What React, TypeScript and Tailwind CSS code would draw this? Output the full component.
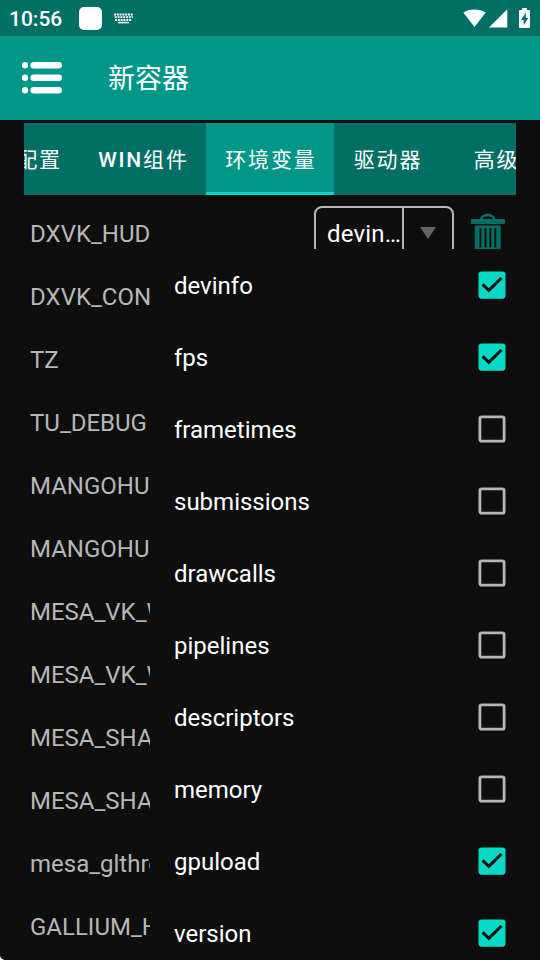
import clsx from "clsx";

interface IOption {
  title: string;
  checked: boolean;
}

interface TabProps {
  title: string;
  prefix?: string;
  className: string;
  active?: boolean;
}

const variables = [
  "DXVK_HUD",
  "DXVK_CONFIG",
  "TZ",
  "TU_DEBUG",
  "MANGOHUD",
  "MANGOHUD_CONFIG",
  "MESA_VK_WSI_DEBUG",
  "MESA_VK_WSI_PRESENT_MODE",
  "MESA_SHADER_CACHE_DISABLE",
  "MESA_SHADER_CACHE_MAX_SIZE",
  "mesa_glthread",
  "GALLIUM_HUD",
];

const options: IOption[] = [
  { title: "devinfo", checked: true },
  { title: "fps", checked: true },
  { title: "frametimes", checked: false },
  { title: "submissions", checked: false },
  { title: "drawcalls", checked: false },
  { title: "pipelines", checked: false },
  { title: "descriptors", checked: false },
  { title: "memory", checked: false },
  { title: "gpuload", checked: true },
  { title: "version", checked: true },
];

const StatusBar = () => (
  <div className="flex h-9 items-center bg-[#026f65] pr-[10px] pl-[9px] text-white">
    <span className="w-[70px] pt-0.5 text-[21px] leading-9 font-medium">10:56</span>
    <div className="size-[23px] rounded-[5px] bg-white" />
    <svg className="ml-3 h-[11px] w-[19px]" viewBox="0 0 19 11" stroke="white" fill="none">
      <path d="M0 1.5h19M1 7h17" strokeWidth="1.8" strokeDasharray="2 0.8" />
      <path d="M0.8 4.2h18" strokeWidth="1.8" strokeDasharray="2 0.8" />
      <path d="M4 9.6h11" strokeWidth="1.5" />
    </svg>
    <svg className="ml-auto h-[19px] w-[23px]" viewBox="0 0 23 19" fill="white">
      <path d="M0.3 3.6C6.5-0.6 16.5-0.6 22.7 3.6L11.5 18z" />
    </svg>
    <svg className="ml-[3px] size-[19px]" viewBox="0 0 19 19" fill="white">
      <path d="M18.3 0.2V18.5H0z" />
    </svg>
    <svg className="ml-[11px] mb-px h-5 w-[11px]" viewBox="0 0 11 20">
      <path d="M3.2 0h4.6v2H10q1 0 1 1v16q0 1-1 1H1q-1 0-1-1V3q0-1 1-1h2.2z" fill="white" />
      <path d="M6.8 4.7L2 12h2.7v5.3L9.2 10H6.8z" fill="#026f65" />
    </svg>
  </div>
);

const Header = () => (
  <div className="flex h-[84px] items-center bg-[#009788] pl-[22px] text-white">
    <svg className="h-8 w-10" viewBox="0 0 40 32" fill="white">
      <circle cx="3" cy="3.3" r="3.2" />
      <circle cx="3" cy="15.8" r="3.2" />
      <circle cx="3" cy="28.3" r="3.2" />
      <rect x="8.5" y="0" width="31.5" height="6.6" rx="3.3" />
      <rect x="8.5" y="12.5" width="31.5" height="6.6" rx="3.3" />
      <rect x="8.5" y="25" width="31.5" height="6.6" rx="3.3" />
    </svg>
    <h1 className="ml-[46px] pt-0.5 text-[27px] leading-9">新容器</h1>
  </div>
);

const Tab = (props: TabProps) => {
  const { title, prefix, className, active } = props;

  return (
    <div
      className={clsx(
        "flex shrink-0 items-center justify-center border-b-3 pt-[7px] text-[21px] tracking-[1.875px] whitespace-nowrap text-white",
        active ? "border-[#03dac5] bg-[#009788]" : "border-transparent",
        className
      )}
    >
      <span>
        {prefix && <span className="font-medium">{prefix}</span>}
        {title}
      </span>
    </div>
  );
};

const Checkbox = ({ checked }: { checked: boolean }) => (
  <svg className="size-7" viewBox="0 0 28 28" fill="none">
    {checked ? (
      <>
        <rect x="0.5" y="0.4" width="27" height="27.3" rx="3" fill="#03dac5" />
        <path d="M4.6 13.2L10.8 19.4L23.4 7" stroke="#0e0e0e" strokeWidth="3" />
      </>
    ) : (
      <rect x="1.9" y="1.8" width="24.2" height="24.4" rx="1.8" stroke="#b7b7b7" strokeWidth="2.8" />
    )}
  </svg>
);

const TrashIcon = () => (
  <svg className="ml-[17px] h-[41px] w-[34px]" viewBox="0 0 34 41">
    <path d="M10 6.5a6.8 5.4 0 0 1 13.4 0" fill="none" stroke="#026f65" strokeWidth="2.6" />
    <rect x="-0.3" y="6" width="34.3" height="5" rx="1" fill="#026f65" />
    <path d="M3.7 12.5H29.7V41H3.7z" fill="#026f65" />
    <path d="M9.4 15.3V34.5M14.5 15.3V34.5M19.4 15.3V34.5M24.3 15.3V34.5" stroke="#0e0e0e" strokeWidth="1.9" />
  </svg>
);

export default function App() {
  return (
    <div className="h-[960px] w-[540px] bg-white">
      <div className="relative h-full overflow-hidden rounded-bl-[5px] bg-[#0e0e0e] font-['Roboto','Noto_Sans_CJK_SC',sans-serif]">
        <StatusBar />
        <Header />
        <div className="mx-6 mt-[3px] flex h-[72px] overflow-hidden bg-[#026f65]">
          <Tab title="配置" className="-ml-[27px] w-[82px] pl-[2px]" />
          <Tab prefix="WIN" title="组件" className="w-[127px] pl-[2px]" />
          <Tab title="环境变量" className="w-[128px] pl-[2px]" active />
          <Tab title="驱动器" className="w-[108px]" />
          <Tab title="高级" className="w-[108px] pl-px" />
        </div>
        <div className="flex flex-col pt-[7px] pl-[30px] text-2xl">
          {variables.map((name, id) => (
            <div key={id} className="flex h-[63px] shrink-0 items-center">
              <span className="w-[284px] text-[#b7b7b7]">{name}</span>
              {id === 0 && (
                <>
                  <div className="flex h-[55px] w-[140px] rounded-lg border-2 border-[#b7b7b7] text-white">
                    <span className="w-[88px] border-r-2 border-[#b7b7b7] pl-[11px] leading-[53px] tracking-[0.2px]">
                      devin…
                    </span>
                    <div className="flex flex-1 items-center justify-center">
                      <svg className="mb-px h-3 w-4" viewBox="0 0 16 12" fill="#636363">
                        <path d="M0 0H16L8 12z" />
                      </svg>
                    </div>
                  </div>
                  <TrashIcon />
                </>
              )}
            </div>
          ))}
        </div>
        <div className="absolute top-[249px] right-0 bottom-0 w-[390px] overflow-hidden bg-[#0e0e0e] pr-[34px] pl-6">
          {options.map((option) => (
            <div key={option.title} className="flex h-[72px] items-center justify-between">
              <span className="pt-0.5 text-2xl text-white">{option.title}</span>
              <Checkbox checked={option.checked} />
            </div>
          ))}
        </div>
      </div>
    </div>
  );
}
